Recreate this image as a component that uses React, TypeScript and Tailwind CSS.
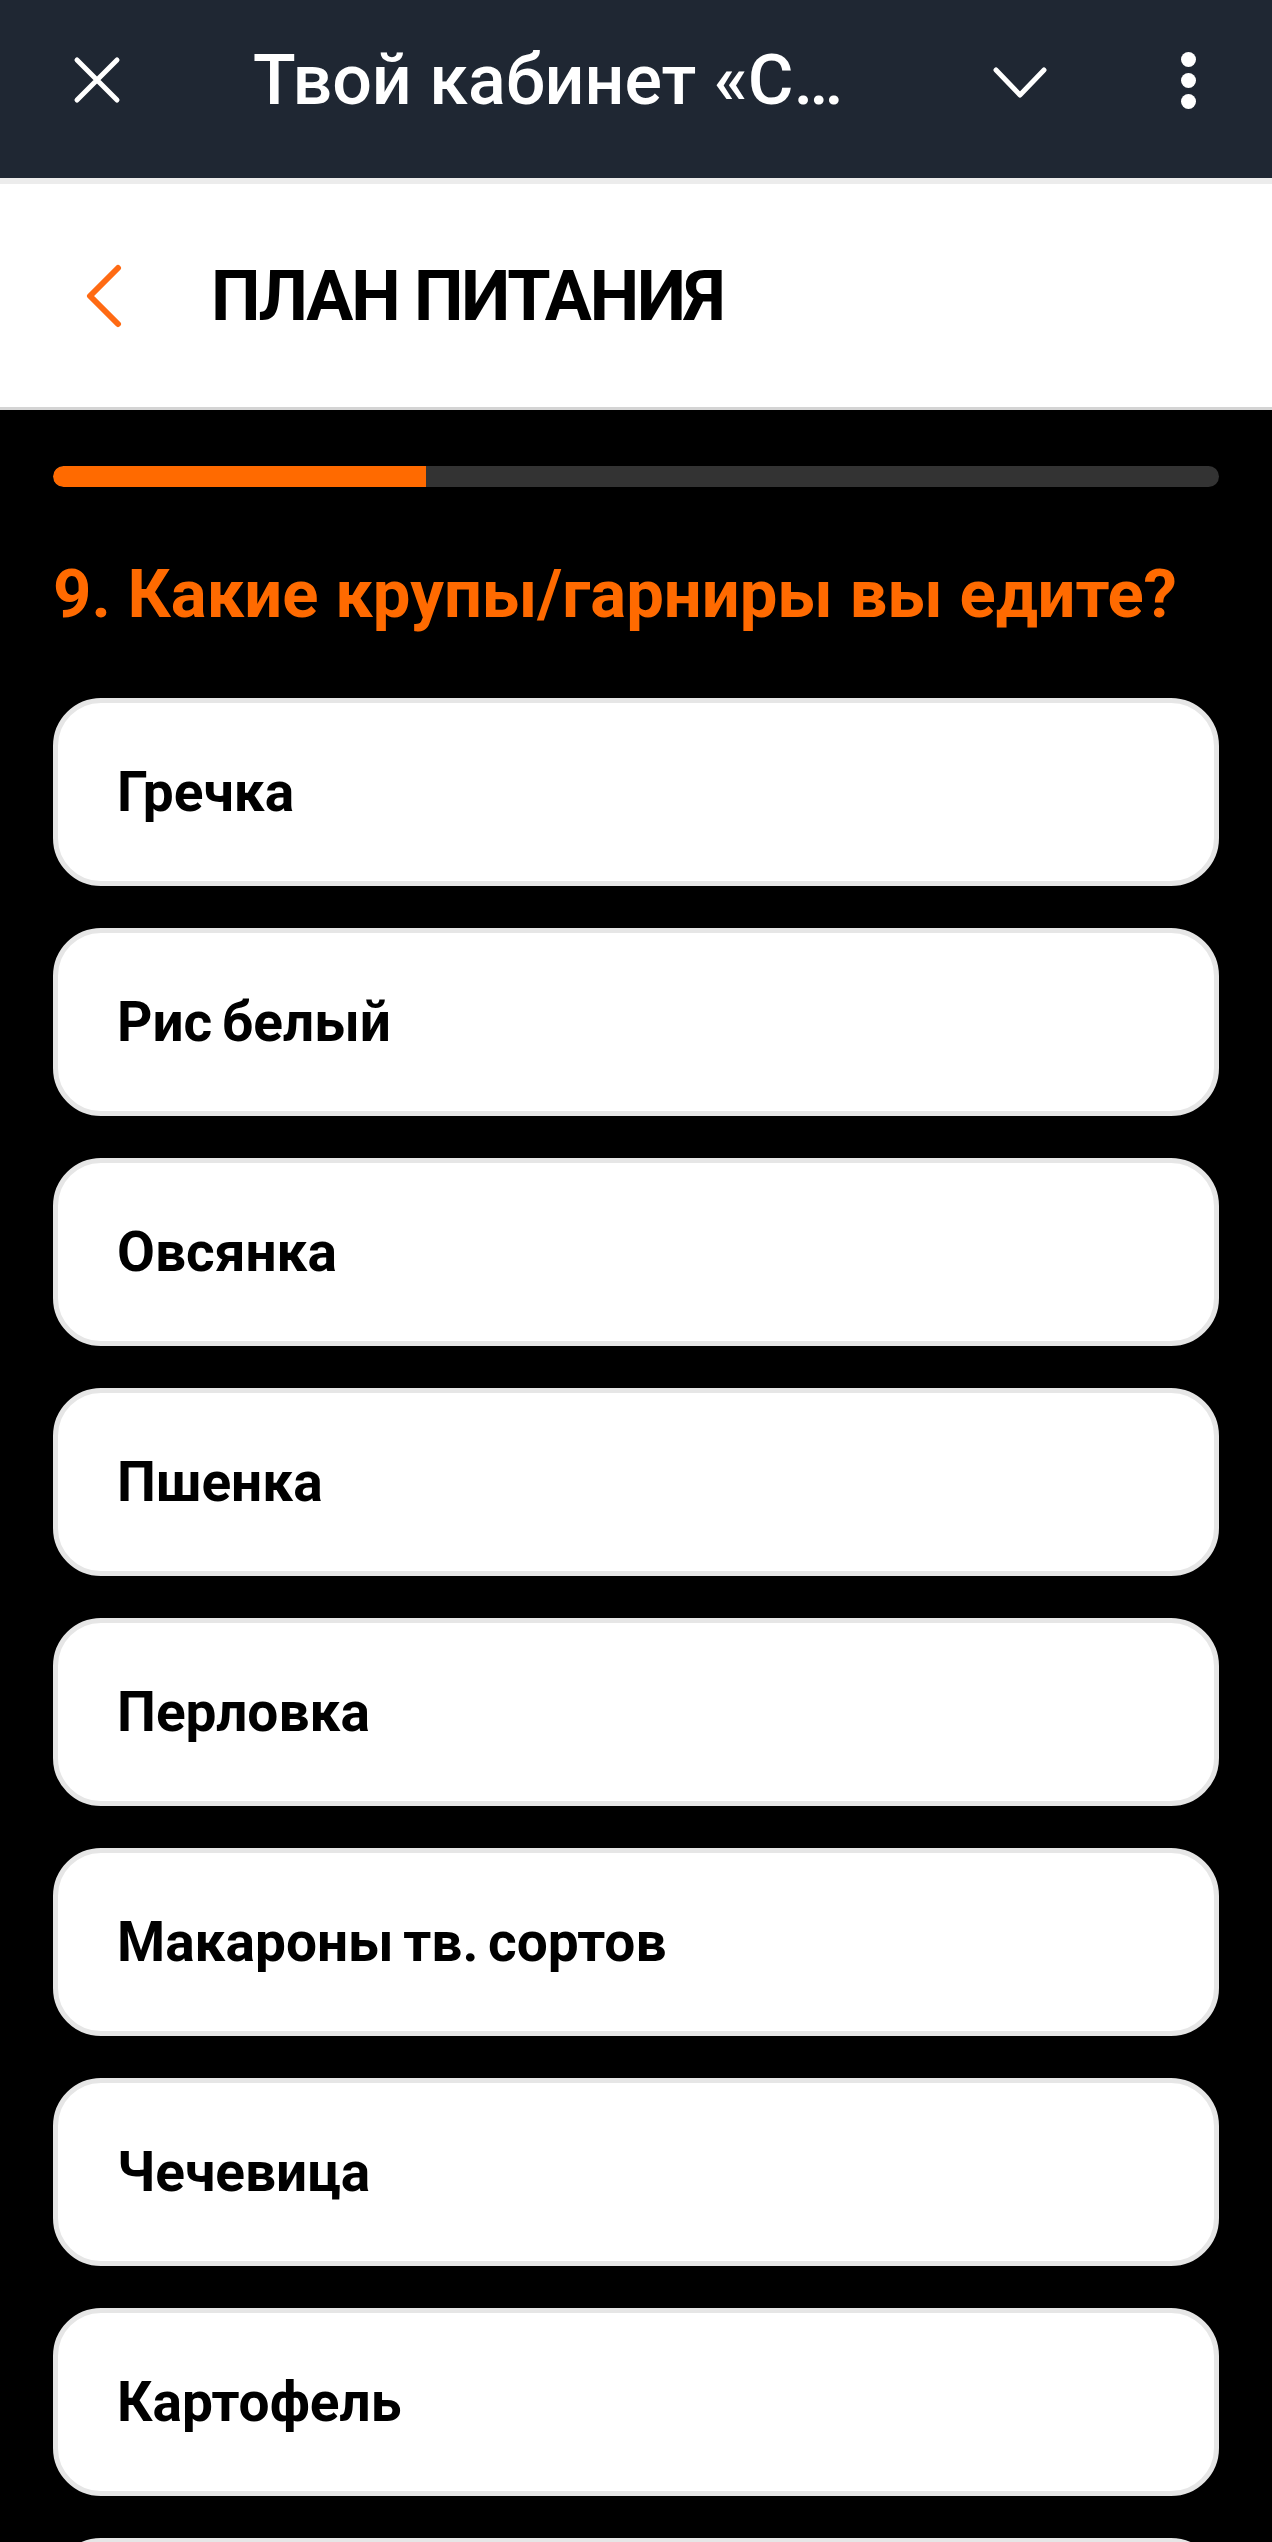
import React from "react";

const items = [
  "Гречка",
  "Рис белый",
  "Овсянка",
  "Пшенка",
  "Перловка",
  "Макароны тв. сортов",
  "Чечевица",
  "Картофель",
  "",
];

export default function App() {
  return (
    <div
      className="w-[1272px] h-[2542px] overflow-hidden bg-black"
      style={{ fontFamily: "Roboto, 'Noto Sans', sans-serif" }}
    >
      {/* Top app bar */}
      <div className="h-[178px] bg-[#1f2733] flex items-center pb-[18px]">
        <svg
          className="ml-[73px] w-[48px] h-[48px] shrink-0"
          viewBox="0 0 48 48"
          fill="none"
          stroke="white"
          strokeWidth="5"
          strokeLinecap="round"
        >
          <path d="M4 4 L44 44 M44 4 L4 44" />
        </svg>
        <div className="ml-[132px] text-white text-[70px] font-medium leading-none whitespace-nowrap">
          Твой кабинет «С…
        </div>
        <div className="flex-1" />
        <svg
          className="w-[56px] h-[34px] shrink-0 mt-[6px]"
          viewBox="0 0 56 34"
          fill="none"
          stroke="white"
          strokeWidth="5"
          strokeLinecap="round"
          strokeLinejoin="round"
        >
          <path d="M4 4 L28 29 L52 4" />
        </svg>
        <div className="ml-[132px] mr-[76px] w-[16px] flex flex-col items-center gap-[6px]">
          <div className="w-[15px] h-[15px] rounded-full bg-white" />
          <div className="w-[15px] h-[15px] rounded-full bg-white" />
          <div className="w-[15px] h-[15px] rounded-full bg-white" />
        </div>
      </div>

      {/* White header */}
      <div className="h-[232px] bg-white border-t-[6px] border-t-[#ececec] border-b-[3px] border-b-[#d4d4d4] flex items-center">
        <svg
          className="ml-[84px] w-[40px] h-[64px] shrink-0"
          viewBox="0 0 40 64"
          fill="none"
          stroke="#ff6a13"
          strokeWidth="6"
          strokeLinecap="round"
          strokeLinejoin="round"
        >
          <path d="M34 4 L6 32 L34 60" />
        </svg>
        <div className="ml-[87px] text-black text-[70px] font-bold leading-none tracking-[-0.03em] whitespace-nowrap">
          ПЛАН ПИТАНИЯ
        </div>
      </div>

      {/* Body */}
      <div className="px-[53px] pt-[56px]">
        <div className="h-[21px] rounded-full bg-[#333333] overflow-hidden">
          <div className="h-full w-[32%] bg-[#ff6a00] rounded-l-full" />
        </div>
        <div className="mt-[74px] text-[#ff6a00] text-[67px] font-bold leading-none whitespace-nowrap">
          9. Какие крупы/гарниры вы едите?
        </div>
        <div className="mt-[70px] flex flex-col gap-[42px]">
          {items.map((t, i) => (
            <div
              key={i}
              className="h-[188px] shrink-0 bg-white rounded-[48px] border-[5px] border-[#e6e6e6] flex items-center pl-[59px]"
            >
              {t && (
                <span className="text-black text-[55px] font-bold leading-none [word-spacing:-4px]">
                  {t}
                </span>
              )}
            </div>
          ))}
        </div>
      </div>
    </div>
  );
}
